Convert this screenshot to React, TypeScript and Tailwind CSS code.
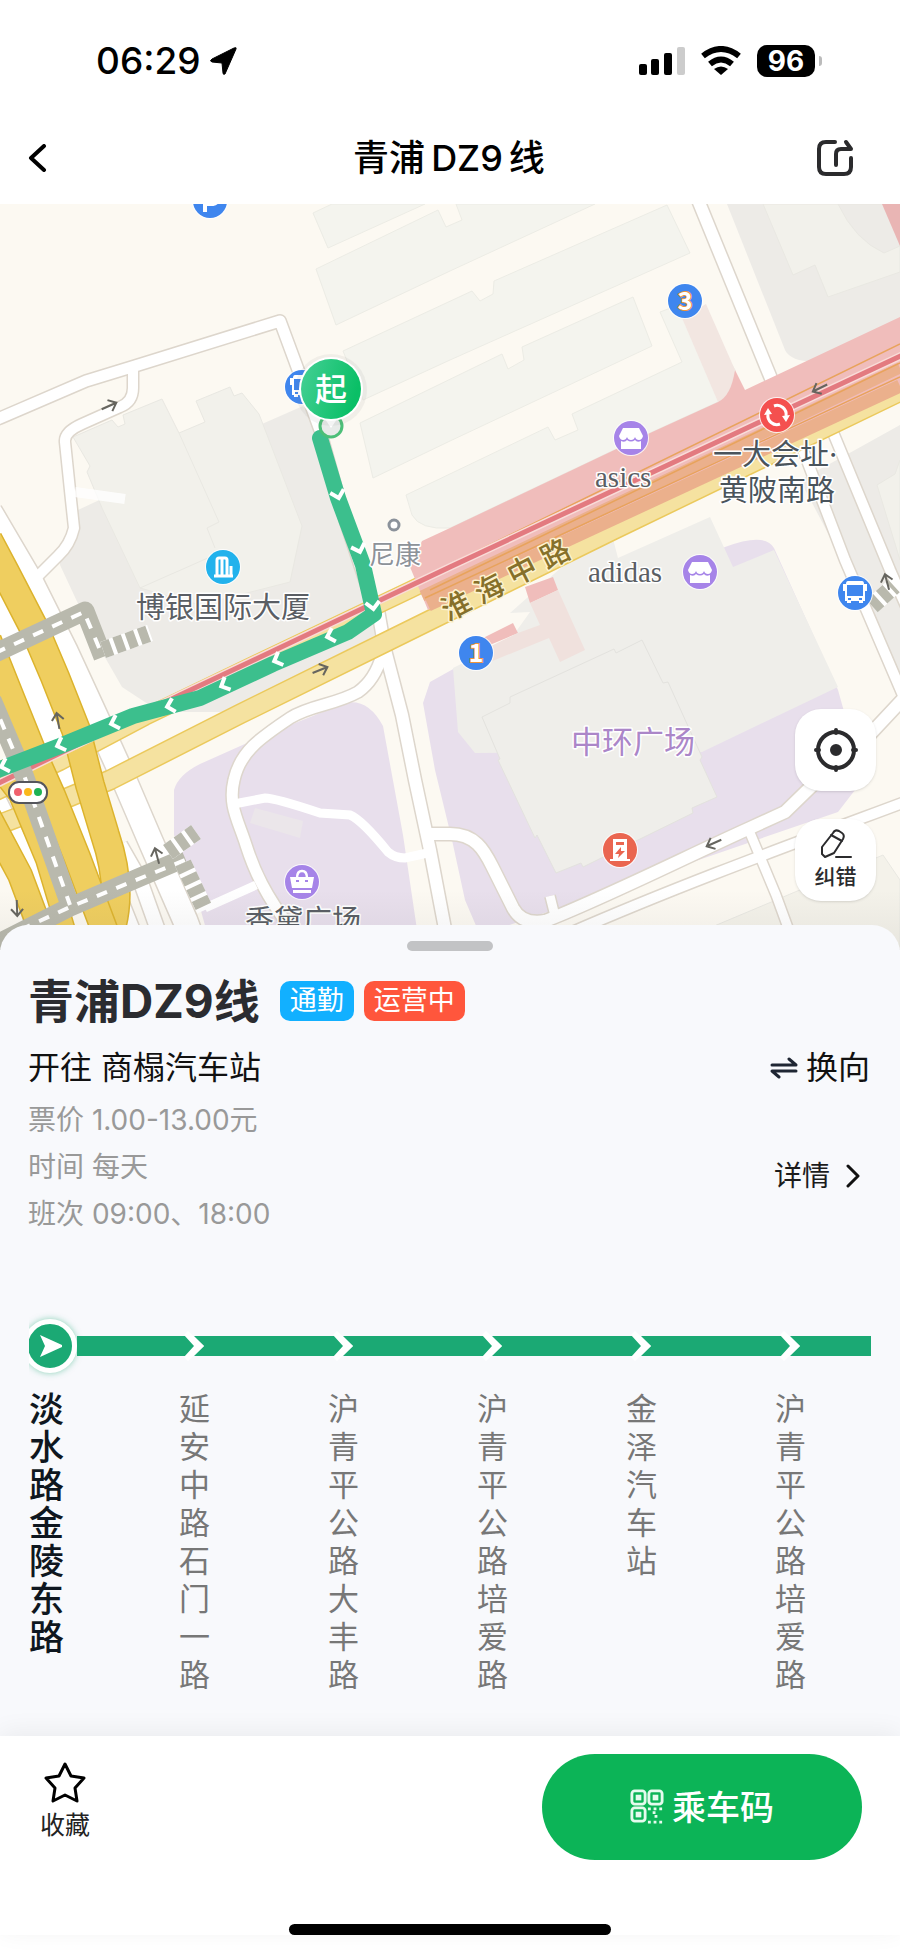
import React from "react";

const stops = [
  "淡水路金陵东路",
  "延安中路石门一路",
  "沪青平公路大丰路",
  "沪青平公路培爱路",
  "金泽汽车站",
  "沪青平公路培爱路",
];

const whiteRoads = [
  { d: "M-10 422L0 418L86 381L135 366L280 321L300 375L320 430L345 520L378 620", w: 11 },
  { d: "M133 366V388Q133 402 120 407L82 424Q64 432 65 442L71 500L74 528Q70 545 58 556L30 584", w: 10 },
  { d: "M-10 512L30 580L65 650L95 715L120 770L150 840L185 920L198 955", w: 24 },
  { d: "M-10 600L20 670L45 730L70 800L98 870L130 950", w: 34 },
  { d: "M-10 800L20 860L50 950", w: 30 },
  { d: "M120 845L140 880L165 950", w: 14 },
  { d: "M378 610L385 650L402 715L415 780L430 850L450 955", w: 12 },
  { d: "M382 655Q375 680 358 692C335 705 310 705 290 718C260 738 240 752 234 780C228 805 238 820 246 845C254 870 265 895 292 930L300 950", w: 11 },
  { d: "M430 834H450C475 834 484 850 492 866L513 908Q522 925 545 921C600 900 690 855 750 828L785 812L822 776L860 745L905 697", w: 12 },
  { d: "M550 896L556 920", w: 9 },
  { d: "M570 933C680 885 790 845 905 802", w: 10 },
  { d: "M748 828L776 895L798 955", w: 9 },
  { d: "M698 200L779 398", w: 12 },
  { d: "M803 450L845 560L905 700", w: 10 },
  { d: "M832 430L890 570L910 615", w: 10 },
];

const yellowRoads = [
  { d: "M-12 540L5 572L35 630L55 677L76 730L90 785L105 835Q122 885 112 925L105 955", w: 27 },
  { d: "M-12 640L12 700L35 757L52 795L77 857L112 950", w: 25 },
  { d: "M-12 815L20 875L50 955", w: 23 },
  { d: "M-5 765L18 795L45 860L72 950", w: 17 },
];

const paleYellowRoads = [
  { d: "M-10 795L60 762L145 717L280 652L410 590L560 517L905 357", w: 15 },
  { d: "M-10 828L50 805L110 780L240 714L390 640L613 530L905 389", w: 18 },
];

const blocks = [
  "M313 213L332 204H425L328 248Z",
  "M316 269L438 210L446 227L462 220L456 204H595L450 271L336 325Z",
  "M343 351L472 291L480 301L493 294L494 281L667 205L690 253L450 360L363 400Z",
  "M360 423L502 354L508 369L524 360L522 347L633 297L652 346L450 441L373 478Z",
  "M406 495L548 427L555 440L578 430L572 414L682 362L660 312L692 300L735 370Q730 395 718 402L650 433L450 528Q420 530 412 515Z",
];

const routeChevrons = [
  [338, 495, 75],
  [359, 549, 72],
  [373, 606, 82],
  [330, 636, 163],
  [277, 660, 158],
  [224, 685, 155],
  [170, 706, 165],
  [114, 723, 162],
  [60, 745, 160],
  [4, 766, 162],
];

const roadArrows = [
  [109, 406, -24],
  [320, 670, -22],
  [58, 721, -100],
  [157, 856, -105],
  [17, 908, 88],
  [820, 388, 154],
  [714, 843, 156],
  [887, 582, -105],
];

const Road = ({ d, w, edge, fill }: { d: string; w: number; edge?: string; fill?: string }) => (
  <path d={d} strokeWidth={edge ? w + 3 : w} stroke={edge || fill} fill="none" strokeLinejoin="round" />
);

const Pin = ({ x, y, color, children }: { x: number; y: number; color: string; children?: React.ReactNode }) => (
  <g transform={`translate(${x} ${y})`}>
    <circle r="18" fill="#fff" opacity="0.8" />
    <circle r="17" fill={color} />
    {children}
  </g>
);

const Shop = () => (
  <>
    <path d="M-8 -10H8L12 -2Q11 2 8 2Q5 2 4 -1Q3 2 0 2Q-3 2 -4 -1Q-5 2 -8 2Q-11 2 -12 -2Z" fill="#fff" />
    <path d="M-10 3Q-6 5 -4 2Q0 5 4 2Q6 5 10 3V11H-10Z" fill="#fff" />
  </>
);

const BusGlyph = () => (
  <>
    <path
      d="M-7 -12H7Q9 -12 9 -9H12V-2H10V8H8V10H4V8H-4V10H-8V8H-10V-2H-12V-9H-9Q-9 -12 -7 -12Z"
      fill="#fff"
    />
    <path d="M-8 -8H8V3H-8ZM-7 5H-4V7H-7ZM4 5H7V7H4Z" fill="#3f86ee" />
  </>
);

const Map = () => (
  <svg
    viewBox="0 204 900 746"
    preserveAspectRatio="xMidYMid slice"
    className="block h-[746px] w-full"
    fontFamily="Inter, 'Noto Sans CJK SC', sans-serif"
  >
    <defs>
      <linearGradient id="start" x1="0" y1="0" x2="1" y2="0.3">
        <stop offset="0" stopColor="#45d096" />
        <stop offset="1" stopColor="#0abf66" />
      </linearGradient>
      <linearGradient id="fade" x1="0" y1="0" x2="0" y2="1">
        <stop offset="0" stopColor="#555" stopOpacity="0" />
        <stop offset="1" stopColor="#555" stopOpacity="0.08" />
      </linearGradient>
    </defs>
    <rect y="204" width="900" height="746" fill="#fcf9f2" />

    {/* land */}
    <path
      d="M60 545L78 510L262 424L303 406L332 450L372 610L378 634L225 712L160 712L122 687L95 640L60 565Z"
      fill="#edebe7"
    />
    <path d="M727 204L785 350Q792 364 825 361L900 322V204Z" fill="#edebe7" />
    <path d="M800 480L846 455L900 425V690L850 575Z" fill="#edebe7" />
    <path
      d="M174 790Q178 775 200 764L258 738L345 703Q368 698 383 726L403 835L420 950H212L195 890L174 835Z"
      fill="#e8dfec"
    />
    <path
      d="M423 703L430 682L455 668L725 547Q765 532 774 548L838 690L852 740L855 790L838 812L480 935L465 900L452 840L435 770Z"
      fill="#e8dfec"
    />
    {blocks.map((d, i) => (
      <path key={i} d={d} fill="#f4f4ee" stroke="#ecece5" strokeWidth="1" />
    ))}
    <g fill="#f2f1eb" stroke="#e9e8e2" strokeWidth="1">
      <path d="M73 437L112 420L118 427L125 424L123 415L162 399L179 433L205 422L196 401L230 387L234 396L242 393L259 414L302 526L290 582L200 605L140 588L102 508L87 472L90 466Z" />
      <path d="M179 433L219 522L207 528L215 548M140 588L210 557" fill="none" />
      <path d="M763 204L793 275L815 265L828 297L900 272V204Z" />
      <path d="M838 204Q855 240 884 253L900 246V204Z" fill="#edebe7" />
      <path d="M877 485L895 474L900 460V560Z" />
      <path d="M700 932L883 855L900 880V950H700Z" fill="#f4f2ea" />
    </g>
    <path d="M255 808L303 821L300 838L250 823Z" fill="#ebe6ea" />
    <path
      d="M453 668L510 640L530 612L510 613L572 558L612 535L618 558L710 517L733 567L774 550L838 687L702 752L475 753L458 732Z"
      fill="#efeeea"
    />
    <path
      d="M482 717L510 703L510 697L614 649L616 653L642 640L663 683L668 682L702 757L700 760L717 797L692 808L693 813L583 867L581 863L556 873L537 835L535 838L498 760L500 759Z"
      fill="#efeeea"
      stroke="#e3e2de"
      strokeWidth="1"
    />

    {/* streets */}
    {whiteRoads.map((r, i) => (
      <Road key={i} {...r} edge="#ddd6cc" />
    ))}
    {whiteRoads.map((r, i) => (
      <Road key={i} {...r} fill="#fff" />
    ))}
    <path
      d="M234 804L265 798Q275 798 320 813L350 815Q362 820 388 852Q395 858 405 858L432 852M205 908L256 885"
      stroke="#fff"
      strokeWidth="9"
      fill="none"
    />
    <path d="M75 492L125 499" stroke="#fff" strokeWidth="10" opacity="0.8" />
    {paleYellowRoads.map((r, i) => (
      <Road key={i} {...r} edge="#ebc95c" />
    ))}
    {paleYellowRoads.map((r, i) => (
      <Road key={i} {...r} fill="#f5e2a0" />
    ))}
    {yellowRoads.map((r, i) => (
      <React.Fragment key={i}>
        <Road {...r} edge="#dcb32d" />
        <Road {...r} fill="#efce5f" />
      </React.Fragment>
    ))}

    {/* metro station footprint */}
    <path d="M410 567L422 541L450 528L650 433L718 402L735 370L745 390L900 317V385L613 516L568 545L428 610Z" fill="#f0bdbb" />
    <path d="M682 318L706 304L735 370Q731 396 718 402Z" fill="#f2e6e1" />
    <path d="M882 204H900V246Z" fill="#e9b5b4" />
    <path d="M422 596L900 368" stroke="#ebb08c" strokeWidth="11" />
    <path d="M428 605L900 386" stroke="#ebb08c" strokeWidth="13" />
    <path d="M418 580L900 344M430 590L900 363M425 598L900 377" stroke="#e8a35c" strokeWidth="1.5" />
    <path d="M525 587L553 577L558 590L530 603ZM483 638L513 623L518 633L485 647Z" fill="#f0bdbb" />
    <path d="M530 603L558 590L585 650L560 662L549 638L490 662L487 648L518 633L540 625Z" fill="#f0e1dd" />
    <path d="M-5 785L50 758L180 695L450 567L905 354" stroke="#f9dcd8" strokeWidth="8" fill="none" />
    <path d="M-5 785L50 758L180 695L450 567L905 354" stroke="#e37a80" strokeWidth="5" fill="none" />

    {/* footbridges */}
    <g fill="none" strokeLinejoin="round">
      <path d="M-5 653L85 611L103 657M-8 700L24 775L70 905M-5 945L70 907L185 858" stroke="#b9b9ad" strokeWidth="19" />
      <path d="M-5 653L84 612L100 650M-8 700L24 775L70 905M20 930L70 907L190 858" stroke="#fff" strokeWidth="4" strokeDasharray="11 10" />
      <path d="M103 650L150 633M168 852L196 832M183 863L205 910M872 606L894 586" stroke="#fff" strokeWidth="17" />
      <path d="M103 650L150 633M168 852L196 832M183 863L205 910M872 606L894 586" stroke="#b9b9ad" strokeWidth="17" strokeDasharray="9 4" />
    </g>

    {/* route */}
    <path
      d="M320 438L338 498L363 565L374 614L348 632L273 664L200 698L133 716L60 746L-5 771"
      fill="none"
      stroke="#3cbf8d"
      strokeWidth="16"
      strokeLinecap="round"
      strokeLinejoin="round"
    />
    {routeChevrons.map(([x, y, r]) => (
      <path
        key={y}
        d="M-4 -7L3 0L-4 7"
        transform={`translate(${x} ${y}) rotate(${r})`}
        stroke="#fff"
        strokeWidth="4"
        fill="none"
      />
    ))}
    {roadArrows.map(([x, y, r]) => (
      <path
        key={y}
        d="M-8 0H8M1 -6L8 0L1 6"
        transform={`translate(${x} ${y}) rotate(${r})`}
        stroke="#66655f"
        strokeWidth="2"
        fill="none"
      />
    ))}

    {/* pins */}
    <Pin x={210} y={201} color="#3f86ee">
      <path d="M-5 11V-8H3Q8 -8 8 -3T3 3H-5" stroke="#fff" strokeWidth="4" fill="none" />
    </Pin>
    <Pin x={302} y={387} color="#3f86ee">
      <BusGlyph />
    </Pin>
    <Pin x={855} y={593} color="#3f86ee">
      <BusGlyph />
    </Pin>
    <Pin x={631} y={438} color="#a684e8">
      <Shop />
    </Pin>
    <Pin x={700} y={572} color="#a684e8">
      <Shop />
    </Pin>
    <Pin x={223} y={567} color="#22b2ec">
      <path d="M-9 9H10M-6 8V-7Q-6 -9 -4 -9H2Q4 -9 4 -7V8M-1 -8V8M8 8V-1" stroke="#fff" strokeWidth="3" fill="none" />
    </Pin>
    <Pin x={777} y={415} color="#f4504f">
      <path d="M-9 -1A9 9 0 0 0 3 9M9 1A9 9 0 0 0 -3 -9" stroke="#fff" strokeWidth="3" fill="none" />
      <path d="M-9 -7L-13 0L-5 -1ZM9 7L13 0L5 1Z" fill="#fff" />
    </Pin>
    <Pin x={620} y={850} color="#ea6550">
      <path d="M-7 -11H7V9H10V11H-10V9H-7Z" fill="#fff" />
      <path d="M-4 -8H4V-5H-4ZM1 -3L-5 4H-1L-2 8L5 1H1Z" fill="#ea6550" />
    </Pin>
    <Pin x={302} y={882} color="#a684e8">
      <path d="M-12 -5H12L10 6H-10ZM-9 8H9V11H-9Z" fill="#fff" />
      <path d="M-5 -4Q-5 -11 0 -11T5 -4" stroke="#fff" strokeWidth="2.5" fill="none" />
      <path d="M-6 -2H-3V0H-6ZM3 -2H6V0H3Z" fill="#a684e8" />
    </Pin>
    <g fontFamily="'Noto Sans CJK SC', sans-serif" fontSize="25" fontWeight="700" textAnchor="middle" fill="#fff">
      <Pin x={685} y={301} color="#3f86ee">
        <text y="9" stroke="#f0953a" strokeWidth="2" paintOrder="stroke">3</text>
      </Pin>
      <Pin x={476} y={653} color="#3f86ee">
        <text y="9" stroke="#f0953a" strokeWidth="2" paintOrder="stroke">1</text>
      </Pin>
    </g>
    <rect x="9" y="782" width="38" height="21" rx="10" fill="#fff" stroke="#55565c" strokeWidth="2" />
    <circle cx="18" cy="792" r="4" fill="#f0616d" />
    <circle cx="28" cy="792" r="4" fill="#fbb81c" />
    <circle cx="38" cy="792" r="4" fill="#1fb254" />
    <circle cx="394" cy="525" r="5" fill="#fff" stroke="#8b929b" strokeWidth="3" />
    <circle cx="331" cy="426" r="11" fill="#e8ebe9" stroke="#4cbf78" strokeWidth="3" />
    <path d="M325 419H337L331 428Z" fill="#fff" />
    <circle cx="331" cy="390" r="36" fill="#777" opacity="0.08" />
    <circle cx="331" cy="389" r="32" fill="#fff" />
    <circle cx="331" cy="389" r="30" fill="url(#start)" />
    <text x="331" y="401" fontSize="32" fontWeight="500" fill="#fff" textAnchor="middle">起</text>

    {/* place names */}
    <g stroke="#fff" strokeWidth="3" strokeLinejoin="round" paintOrder="stroke" fontSize="29" fill="#5a5e64">
      <text x="136" y="618">博银国际大厦</text>
      <text x="369" y="564" fontSize="26" fill="#8d9299">尼康</text>
      <text y="465" fill="#4a545c">
        <tspan x="713">一大会址·</tspan>
        <tspan x="719" dy="36">黄陂南路</tspan>
      </text>
      <text x="571" y="753" fontSize="31" fill="#ab86c8">中环广场</text>
      <text x="245" y="931">香黛广场</text>
      <g fontFamily="'Liberation Serif', serif">
        <text x="595" y="487">asics</text>
        <text x="588" y="582">adidas</text>
      </g>
      <g fontWeight="500" fill="#86702a" textAnchor="middle" stroke="#fdf3cf">
        <text transform="translate(461 615) rotate(-27)">淮</text>
        <text transform="translate(494 598) rotate(-27)">海</text>
        <text transform="translate(527 580) rotate(-27)">中</text>
        <text transform="translate(560 563) rotate(-27)">路</text>
      </g>
    </g>
    <rect y="890" width="900" height="60" fill="url(#fade)" />
  </svg>
);

const StatusBar = () => (
  <div className="flex items-center justify-between pt-10 pr-[78px] pl-24">
    <div className="flex items-center gap-2 text-[37px] leading-[42px] font-medium">
      06:29
      <svg width="29" height="29" viewBox="0 0 29 29">
        <path d="M27 2L16 27Q14 28 14 26L13 16L3 15Q0 14 3 12L25 1Q28 0 27 2Z" stroke="#000" strokeWidth="1" />
      </svg>
    </div>
    <div className="flex items-center gap-4">
      <svg width="46" height="30" viewBox="0 0 46 30">
        <rect y="18" width="8" height="11" rx="2" />
        <rect x="12" y="13" width="8" height="16" rx="2" />
        <rect x="25" y="7" width="8" height="22" rx="2" />
        <rect x="38" y="1" width="8" height="28" rx="2" fill="#ccc" />
      </svg>
      <svg width="40" height="30" viewBox="0 0 40 30" fill="none" stroke="#000" strokeWidth="6">
        <path d="M2 10Q20 -4 38 10" />
        <path d="M9 18Q20 9 31 18" />
        <path d="M20 29L13 23Q20 18 27 23Z" fill="#000" stroke="none" />
      </svg>
      <div className="flex items-center gap-1">
        <span className="flex h-8 w-[58px] items-center justify-center rounded-[10px] bg-black text-[28px] font-bold text-white">
          96
        </span>
        <span className="h-[10px] w-[3px] rounded-r-full bg-[#bbb]" />
      </div>
    </div>
  </div>
);

const Header = () => (
  <header className="h-[204px] bg-white text-black">
    <StatusBar />
    <div className="grid grid-cols-3 items-center pt-[50px] pr-[46px] pl-[28px]">
      <button aria-label="返回" className="justify-self-start">
        <svg width="20" height="28" viewBox="0 0 20 28" fill="none" stroke="#000" strokeWidth="4" strokeLinecap="round" strokeLinejoin="round">
          <path d="M16 2L3 14L16 26" />
        </svg>
      </button>
      <h1 className="pl-4 text-center text-[36px] leading-[52px] font-medium">
        青浦<span className="mx-1.5">DZ9</span>线
      </h1>
      <button aria-label="分享" className="justify-self-end">
        <svg width="38" height="38" viewBox="0 0 38 38" fill="none" stroke="#2b2b2d" strokeWidth="4" strokeLinecap="round" strokeLinejoin="round">
          <path d="M19 3H10Q3 3 3 10V28Q3 35 10 35H28Q35 35 35 28V19" />
          <path d="M20 26V15Q20 10 25 10H35L30 3" />
        </svg>
      </button>
    </div>
  </header>
);

const MapButtons = () => (
  <div className="absolute right-6 bottom-[49px] flex flex-col gap-7">
    <button aria-label="定位" className="flex h-[82px] w-[81px] items-center justify-center rounded-[26px] bg-white shadow-sm">
      <svg width="44" height="44" viewBox="0 0 44 44" fill="none" stroke="#2b2b2d" strokeWidth="4" strokeLinecap="round">
        <circle cx="22" cy="22" r="18" />
        <path d="M22 2V5M22 39V42M2 22H5M39 22H42" />
        <circle cx="22" cy="22" r="4" fill="#2b2b2d" />
      </svg>
    </button>
    <button className="flex h-[82px] w-[81px] flex-col items-center justify-center gap-1 rounded-[26px] bg-white text-[21px] leading-7 font-medium text-[#2b2b2d] shadow-sm">
      <svg width="32" height="30" viewBox="0 0 32 30" fill="none" stroke="#2b2b2d" strokeWidth="2" strokeLinejoin="round" strokeLinecap="round">
        <path d="M13 4Q15 0 19 2L22 4Q25 6 23 10L14 24L5 28L2 25V18ZM11 6L22 12" />
        <path d="M16 28H31" />
      </svg>
      纠错
    </button>
  </div>
);

const RouteInfo = () => (
  <section className="pr-[30px] pl-7">
    <div className="flex items-center pt-5">
      <h2 className="mr-5 text-[46px] leading-[60px] font-bold text-[#2b2c30]">青浦DZ9线</h2>
      <span className="mr-[10px] rounded-[10px] bg-[#12b0ff] px-[10px] text-[27px] leading-10 text-white">通勤</span>
      <span className="rounded-[10px] bg-[#ff563c] px-[10px] text-[27px] leading-10 text-white">运营中</span>
    </div>
    <div className="mt-3 flex items-center justify-between text-[32px] leading-[50px] text-[#111]">
      <p>开往 商榻汽车站</p>
      <button className="flex items-center gap-2">
        <svg width="28" height="22" viewBox="0 0 28 22" fill="none" stroke="#1f2633" strokeWidth="3" strokeLinecap="round" strokeLinejoin="round">
          <path d="M2 8H26L19 2" />
          <path d="M26 14H2L9 20" />
        </svg>
        换向
      </button>
    </div>
    <div className="mt-1 flex items-center justify-between">
      <div className="text-[28px] leading-[47px] text-[#999]">
        <p>票价 1.00-13.00元</p>
        <p>时间 每天</p>
        <p>班次 09:00、18:00</p>
      </div>
      <button className="mr-2 flex items-center gap-4 pt-4 text-[28px] text-[#1c1c1c]">
        详情
        <svg width="16" height="24" viewBox="0 0 16 24" fill="none" stroke="#111" strokeWidth="3" strokeLinecap="round" strokeLinejoin="round">
          <path d="M2 2L12 12L2 22" />
        </svg>
      </button>
    </div>
  </section>
);

const StopLine = () => (
  <ol className="mx-[29px] mt-[72px] flex overflow-x-auto pb-[42px] [scrollbar-width:none]">
    {stops.map((name, i) => (
      <li key={i} className="w-[149px] shrink-0">
        <div className="flex h-[72px] items-center">
          {i === 0 ? (
            <>
              <span className="-ml-[6px] flex h-[54px] w-[54px] shrink-0 items-center justify-center rounded-full border-[5px] border-white bg-[#1ba974] shadow-[0_0_6px_#1ba97480]">
                <svg width="24" height="22" viewBox="-2 0 24 22" fill="#fff">
                  <path d="M0 0L24 11L0 22L5 11Z" />
                </svg>
              </span>
              <span className="h-5 grow bg-[#1ba974]" />
            </>
          ) : (
            <>
              <span className="h-5 w-[6px] bg-[#1ba974]" />
              <svg width="20" height="30" viewBox="0 0 20 30">
                <path d="M0 5H5L15 15L5 25H0ZM20 5H10L20 15L10 25H20Z" fill="#1ba974" />
                <path d="M0 4L4 0L20 15L4 30L0 26L10 15Z" fill="#fff" />
              </svg>
              <span className="h-5 grow bg-[#1ba974]" />
            </>
          )}
        </div>
        <p
          className={
            i === 0
              ? "mt-2 w-[35px] text-[35px] leading-[38px] font-medium break-all text-[#0f1720]"
              : "mt-2 ml-[1px] w-[31px] text-[31px] leading-[38px] break-all text-[#777]"
          }
        >
          {name}
        </p>
      </li>
    ))}
  </ol>
);

const qrEyes = [
  [2, 2],
  [20, 2],
  [2, 20],
];

const BottomBar = () => (
  <footer className="relative bg-white shadow-[0_-4px_24px_rgba(0,0,0,0.06)]">
    <div className="flex items-start justify-between pt-[18px] pr-[38px] pl-10">
      <button className="flex flex-col items-center gap-1 pt-2 text-[25px] leading-[34px] text-[#222]">
        <svg width="42" height="42" viewBox="0 0 42 42" fill="none" stroke="#000" strokeWidth="3" strokeLinejoin="round">
          <path d="M21 2L27 14L40 16L31 26L33 39L21 33L9 39L11 26L2 16L15 14Z" />
        </svg>
        收藏
      </button>
      <button className="flex h-[106px] w-[320px] items-center justify-center gap-2 rounded-full bg-[#0cb457] text-[34px] font-medium text-white">
        <svg width="34" height="36" viewBox="0 0 36 38" fill="none" stroke="#e5fbee" strokeWidth="3">
          {qrEyes.map(([x, y]) => (
            <g key={`${x}-${y}`}>
              <rect x={x} y={y} width="14" height="14" rx="3" />
              <rect x={x + 5} y={y + 5} width="4" height="4" fill="#e5fbee" strokeWidth="2" />
            </g>
          ))}
          <path d="M19 21H35M24 25H28M26 29H32M19 35H35" strokeDasharray="3 3" />
        </svg>
        乘车码
      </button>
    </div>
    <div className="mx-auto mt-16 mb-4 h-[11px] w-[322px] rounded-full bg-black" />
  </footer>
);

const App = () => {
  return (
    <div className="min-h-screen bg-white font-['Inter','Noto_Sans_CJK_SC',sans-serif]">
      <Header />
      <div className="relative">
        <Map />
        <MapButtons />
      </div>
      <main className="relative -mt-[25px] rounded-t-[28px] bg-[#f8f9fc] pt-4">
        <div className="mx-auto h-[10px] w-[86px] rounded-full bg-[#c2c3c5]" />
        <RouteInfo />
        <StopLine />
      </main>
      <BottomBar />
    </div>
  );
};

export default App;
